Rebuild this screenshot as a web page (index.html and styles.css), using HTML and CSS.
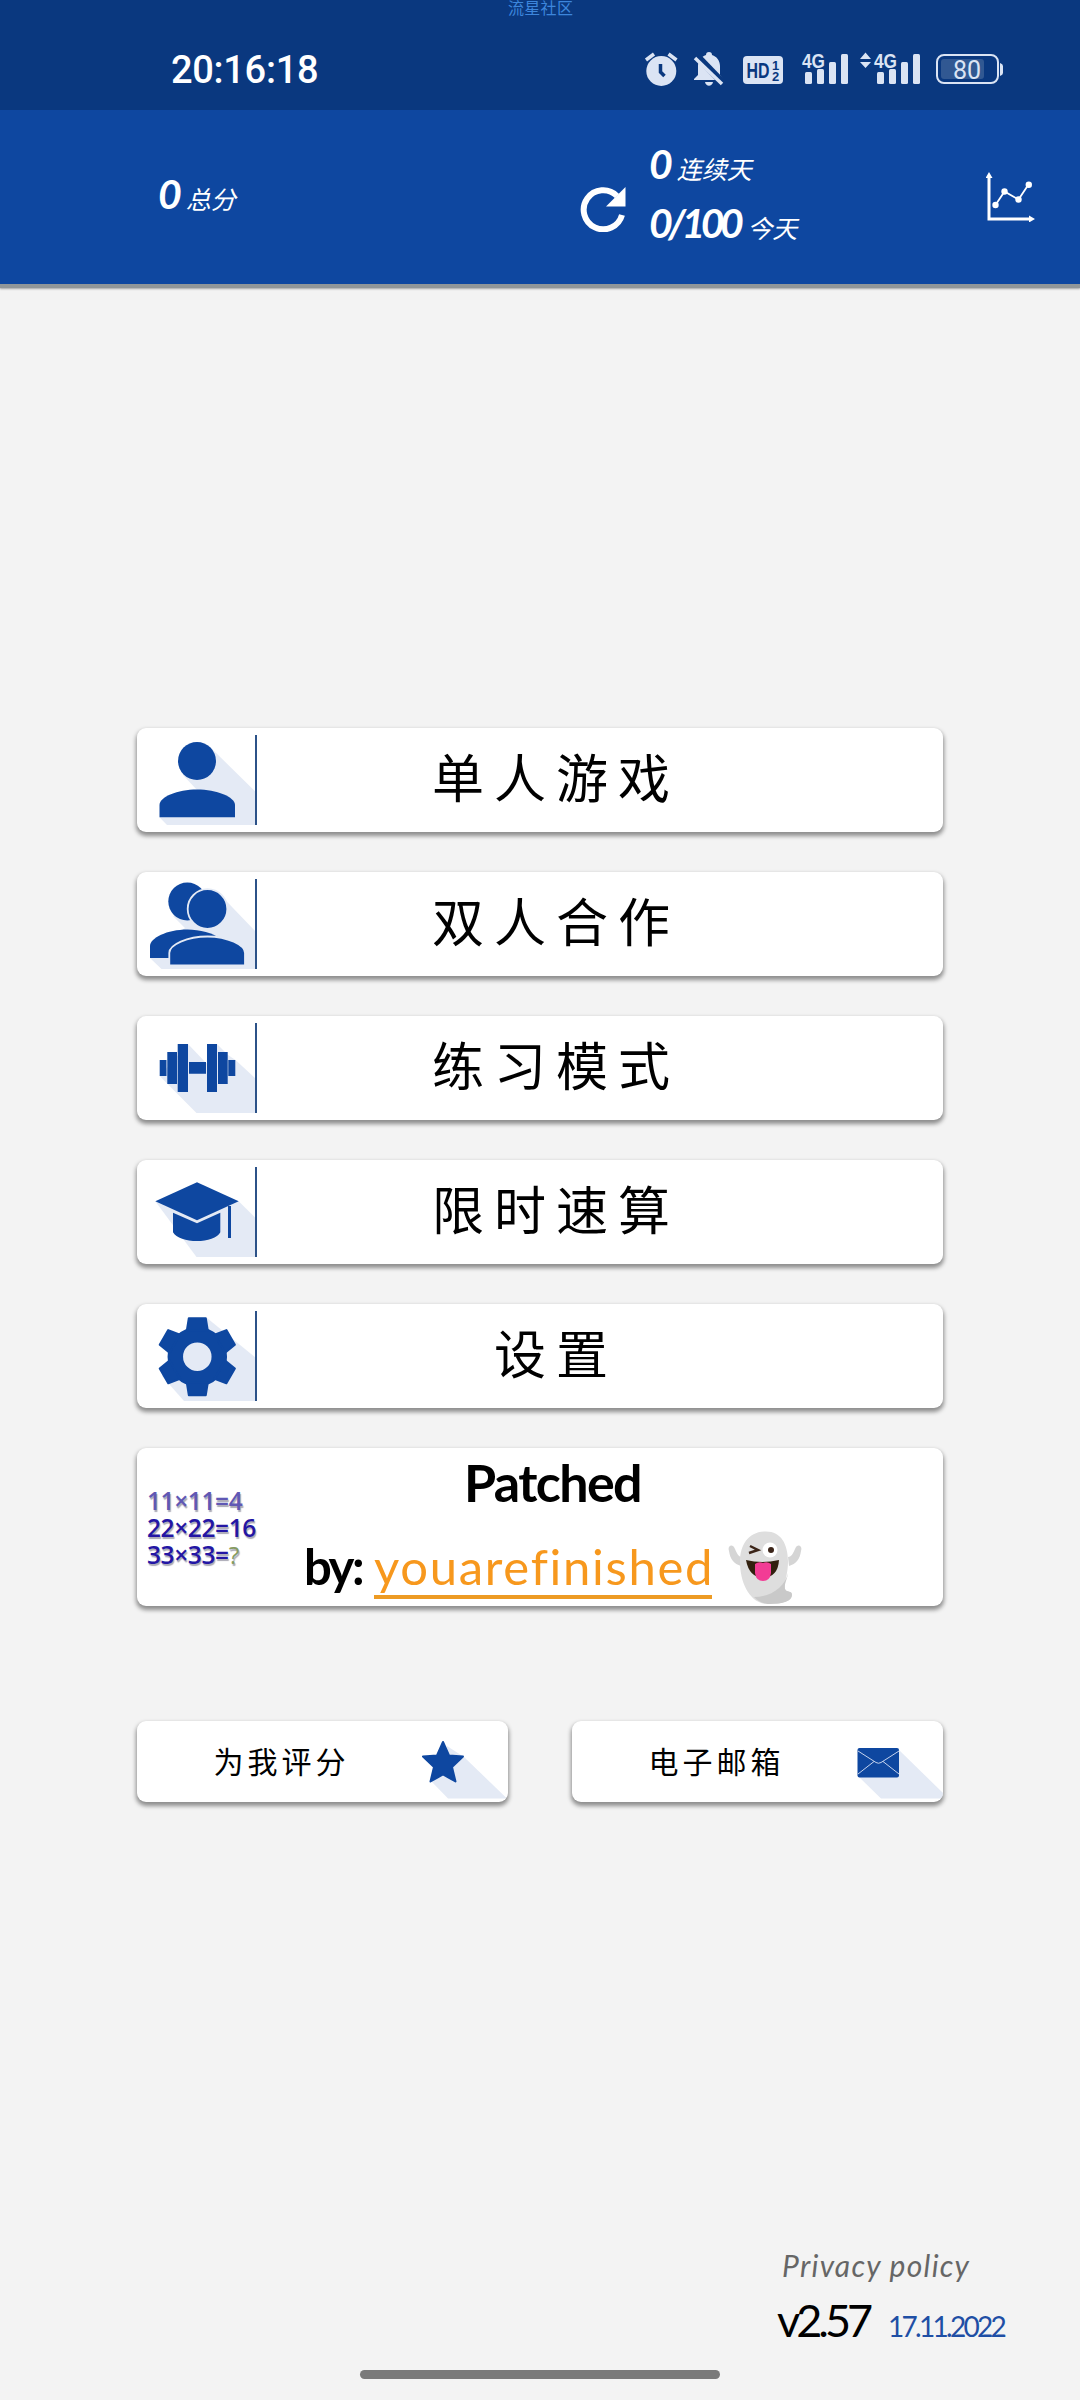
FILE: index.html
```html
<!DOCTYPE html>
<html lang="zh-CN">
<head>
<meta charset="utf-8">
<title>Math</title>
<link rel="stylesheet" href="styles.css">
</head>
<body>
<div class="screen">
  <div class="status">
    <span class="watermark">流星社区</span>
    <span class="clock">20:16:18</span>
    <svg class="status-icons" width="362" height="40" viewBox="642 50 362 40" fill="#dbe4f4">
      <path d="M646 60l8-6M676.500 60l-8-6" stroke="#dbe4f4" stroke-width="3.500"/>
      <circle cx="661.300" cy="71" r="15"/>
      <path d="M660.500 64v8l4 4" fill="none" stroke="#0a387f" stroke-width="3.500"/>
      <path d="M709 52c2 0 3 1 3 3 5 1.500 8 6 8 11v9l3 4v1H694v-1l4-4v-9c0-5 3-9.500 8-11 0-2 1-3 3-3zM705 82h8c-1 5-7 5-8 0z"/>
      <path d="M696 55l27 28" stroke="#0a387f" stroke-width="7"/>
      <path d="M695 58l27 26" stroke="#dbe4f4" stroke-width="3.500"/>
      <rect x="743" y="56" width="40" height="28" rx="4"/>
      <text class="tag" x="746.500" y="78" font-size="21.500" textLength="23" lengthAdjust="spacingAndGlyphs" fill="#0a387f">HD</text>
      <text class="tag" x="772" y="69.500" font-size="13" fill="#0a387f">1</text>
      <text class="tag" x="772" y="81" font-size="13" fill="#0a387f">2</text>
      <text class="tag" x="802" y="67.500" font-size="20" textLength="23" lengthAdjust="spacingAndGlyphs">4G</text>
      <rect x="805" y="72" width="7" height="12" rx="1.500"/><rect x="817" y="69" width="7" height="15" rx="1.500"/><rect x="829" y="62" width="7" height="22" rx="1.500"/><rect x="841" y="54" width="7" height="30" rx="1.500"/>
      <path d="M860 59l5.500-6.500L871 59zM860 62h11l-5.500 6z"/>
      <text class="tag" x="874" y="67.500" font-size="20" textLength="23" lengthAdjust="spacingAndGlyphs">4G</text>
      <rect x="877" y="72" width="7" height="12" rx="1.500"/><rect x="889" y="69" width="7" height="15" rx="1.500"/><rect x="901" y="62" width="7" height="22" rx="1.500"/><rect x="913" y="54" width="7" height="30" rx="1.500"/>
      <rect x="937" y="55" width="61" height="28" rx="7" fill="none" stroke="#dbe4f4" stroke-width="2"/>
      <rect x="941" y="59" width="43" height="20" rx="3" fill="#315892"/>
      <path d="M1000 63q3 1 3 3v7q0 2-3 3z"/>
      <text class="pct" x="953" y="78.500" font-size="25" textLength="28">80</text>
    </svg>
  </div>

  <header class="bar">
    <div class="total"><b>0</b><i>总分</i></div>
    <svg class="reload" width="46" height="46" viewBox="0 0 46 46"><path d="M42 29A19.500 19.500 0 1 1 37 10" fill="none" stroke="#fff" stroke-width="6"/><path d="M45.500 1v19.500H26z" fill="#fff"/></svg>
    <div class="streak">
      <div><b>0</b><i>连续天</i></div>
      <div><b class="wide">0/100</b><i>今天</i></div>
    </div>
    <svg class="chart" width="50" height="50" viewBox="986 172 50 50"><g fill="none" stroke="#fff"><path d="M989 178v41h41" stroke-width="3"/><path d="M995.500 205l9-13.500 14 8 10-15" stroke-width="1.800"/></g><g fill="#fff"><path d="M985.500 178l3.500-6 3.500 6zM1029 215.500l6 3.500-6 3.500z"/><circle cx="995.500" cy="205" r="3.200"/><circle cx="1004.500" cy="191.500" r="3.200"/><circle cx="1018.500" cy="199.500" r="3.200"/><circle cx="1028.800" cy="184.800" r="3.200"/></g></svg>
  </header>

  <main class="menu">
    <div class="card">
      <svg class="icon" viewBox="0 0 120 104"><path class="sh" d="M73.500 19.500L119 64.300V97H30L22.500 89.300 60 62 46 47z"/><circle cx="60" cy="33" r="19"/><path d="M22.500 89.300V77c0-8 18-15.500 37.500-15.500S98 69 98 77v12.300z"/><path class="div" d="M118 7h2v90h-2z"/></svg>
      <span class="label">单人游戏</span>
    </div>
    <div class="card">
      <svg class="icon" viewBox="0 0 120 104"><path class="sh" d="M84 23.500L119 60V97H24.500L13 86l35-30-12-12z"/><circle cx="50.300" cy="29.500" r="19"/><path d="M13 86V74c0-8 17-16.500 37.500-16.500 12 0 26 3.500 32 9L45 86z"/><circle cx="70.500" cy="37" r="19.800" stroke="#e4eaf5" stroke-width="1.800"/><path d="M32.300 93.500V81c0-8.500 18-16.500 38.200-16.500S108 73 108 81v12.500z" stroke="#e4eaf5" stroke-width="1.800"/><path class="div" d="M118 7h2v90h-2z"/></svg>
      <span class="label">双人合作</span>
    </div>
    <div class="card">
      <svg class="icon" viewBox="0 0 120 104"><path class="sh" d="M51 28l18 19h4l7-19 11 11 7.500 5L119 63v34H59.500L22.700 60z"/><path d="M22.700 44h6.800v16h-6.800zM30.300 36H40v32h-9.700zM40.700 28H51v48H40.700zM52 46h17v11.700H52zM70 28h10v48H70zM81 36h9.700v32H81zM91.300 44h7v16h-7z"/><path class="div" d="M118 7h2v90h-2z"/></svg>
      <span class="label">练习模式</span>
    </div>
    <div class="card">
      <svg class="icon" viewBox="0 0 120 104"><path class="sh" d="M101.700 41.300L119 58.500V97H59.500L18.300 41.300z"/><path d="M60 22.300l41.700 19L60 60.300l-41.700-19z"/><path d="M36 52.700l24 10.600 23.300-10.600v19.600C78 84 42 84 36 72.300zM91 46h3v32h-3z"/><path class="div" d="M118 7h2v90h-2z"/></svg>
      <span class="label">限时速算</span>
    </div>
    <div class="card">
      <svg class="icon" viewBox="0 0 120 104"><path class="sh" d="M70 14l49 40v43H47L25 72z"/><g transform="translate(60.300 52.700)"><circle r="22" fill="none" stroke="#0e47a0" stroke-width="15.500"/><g stroke="#0e47a0" stroke-width="2" stroke-linejoin="round"><path id="t" d="M-8.500-38.500H8.500L10.500-26h-21z"/><use href="#t" transform="rotate(60)"/><use href="#t" transform="rotate(120)"/><use href="#t" transform="rotate(180)"/><use href="#t" transform="rotate(240)"/><use href="#t" transform="rotate(300)"/></g></g><path class="div" d="M118 7h2v90h-2z"/></svg>
      <span class="label">设置</span>
    </div>
    <div class="card credit">
      <div class="sums"><span>11×11=4</span><span>22×22=16</span><span>33×33=<em>?</em></span></div>
      <div class="credit-text">
        <div class="patched">Patched</div>
        <div class="by"><b>by:</b><a>youarefinished</a>
          <svg class="ghost" width="74" height="74" viewBox="0 0 74 74"><path d="M1 20c-2-6 4-8 6-2 2 5 4 8 7 8l-1 9C6 33 2 28 1 20zM73 20c2-6-4-8-6-2-2 5-4 8-7 8l1 9c7-2 11-7 12-15z" fill="#d5d5d5"/><path d="M38 .500C53 .500 60 13 60 31c0 12-4 20-3 27 1 4 7 1 7 6 0 6-10 9-24 9C22 73 12 52 12 31 12 13 21 .500 38 .500z" fill="#dedede"/><path d="M60 42c-3 14-17 24-34 24 5 5 10 7 16 7 13 0 22-3 22-9 0-5-5-2-7-6-1-5 2-9 3-16z" fill="#c9c9c9"/><circle cx="42" cy="19" r="7.500" fill="#fff"/><circle cx="43" cy="19" r="3" fill="#3b2418"/><path d="M22 15l8 4-9 3" fill="none" stroke="#3b2418" stroke-width="2.500"/><path d="M18 29q16 4 33 0-1 17-16 18Q21 46 18 29z" fill="#32200f"/><path d="M27 33q4-3 8-1 4-2 8 1v9q-1 8-8 8t-8-8z" fill="#f23c95"/></svg>
        </div>
      </div>
    </div>
  </main>

  <div class="actions">
    <div class="btn"><span>为我评分</span>
      <svg width="86" height="81" viewBox="285 0 86 81"><path class="sh" d="M310 25l17 11 43 41.500h-59L294 60z"/><path d="M306 21l6 13.500 14 1-11 10.500 3.500 14.500-12.500-7-12.500 7L297 46l-11-10.500 14-1z" stroke="#0e47a0" stroke-width="2" stroke-linejoin="round"/></svg></div>
    <div class="btn"><span>电子邮箱</span>
      <svg width="86" height="81" viewBox="285 0 86 81"><path class="sh" d="M326 28l45 44v5.500h-62L286 55z"/><rect x="285.500" y="27" width="41.500" height="29.500" rx="2"/><path d="M286 30l18 11.500q2.500 1.500 5 0L327 30M286 53l16-12.500M327 53l-16-12.500" fill="none" stroke="#c4d3ee"/></svg></div>
  </div>

  <footer class="foot">
    <div class="policy">Privacy policy</div>
    <div class="ver"><span class="num">v2.57</span><span class="date">17.11.2022</span></div>
  </footer>
  <div class="gesture"></div>
</div>
</body>
</html>
```
FILE: styles.css
```css
* { box-sizing: border-box; }
body { margin: 0; background: #f3f3f3; font-family: Lato, "Noto Sans CJK SC", sans-serif; color: #000; }
.screen { width: 1080px; height: 2400px; display: flex; flex-direction: column; position: relative; overflow: hidden; }
.status { height: 110px; flex: none; background: #0a387f; display: flex; justify-content: space-between; align-items: flex-start; padding: 50px 76px 0 171px; }
.watermark { position: absolute; top: 0; left: 508px; font-size: 16px; line-height: 16px; letter-spacing: .300px; color: #3d86dc; white-space: nowrap; }
.clock { font: 500 38px/40px Roboto, sans-serif; letter-spacing: -.300px; color: #fff; white-space: nowrap; }
.tag { font-family: "Liberation Sans", sans-serif; font-weight: 700; }
.pct { font-family: Roboto, sans-serif; font-weight: 400; }

.bar { height: 174px; flex: none; background: #0e47a0; color: #fff; display: flex; align-items: flex-start; padding-left: 158px; box-shadow: 0 4px 1px #909699, 0 5px 2px #aaa; }
.bar b { font-size: 41px; font-style: italic; line-height: 59px; letter-spacing: -2px; }
.bar i { font-size: 25px; margin-left: 6px; }
.total { padding-top: 54px; width: 422px; }
.reload { margin-top: 76px; }
.streak { padding-top: 24px; margin-left: 23px; width: 337px; }
.streak > div { height: 59px; }
.bar .wide { letter-spacing: -4.500px; }
.bar .wide + i { margin-left: 8px; }
.chart { margin-top: 62px; }

.menu { margin: 444px 137px 0; display: flex; flex-direction: column; gap: 40px; }
.card, .btn { background: #fff; border-radius: 9px; box-shadow: 0 3px 4px 1px rgba(0,0,0,.42); }
.card { height: 104px; display: flex; align-items: center; }
.icon { width: 120px; height: 104px; flex: none; fill: #0e47a0; }
.sh { fill: #e4eaf5; }
.div { fill: #2c5288; }
.label { flex: 1; text-align: center; padding: 0 98px 4px 10px; font-size: 52px; line-height: 76px; letter-spacing: 10px; }
.credit { height: 158px; align-items: stretch; }
.sums { width: 120px; padding: 39px 0 0 10px; display: flex; flex-direction: column; font: 600 24.500px/27px "Open Sans", sans-serif; color: #2416a4; text-shadow: 1px 2px 1px #aaa9b5; letter-spacing: -.400px; white-space: nowrap; }
.sums span:first-child { color: #6058b4; }
.sums em { font-weight: 400; font-style: normal; color: #869b62; }
.credit-text { flex: 1; padding-top: 3px; }
.patched { font-size: 52px; font-weight: 700; line-height: 62px; margin-left: 207px; letter-spacing: -1.600px; }
.by { display: flex; align-items: flex-start; margin: 18px 0 0 47px; height: 74px; line-height: 70px; font-size: 49px; }
.by b { width: 70px; flex: none; letter-spacing: -2.500px; }
.by a { width: 338px; flex: none; height: 68px; border-bottom: 4px solid #ed9b24; color: #f7981d; letter-spacing: 1.700px; white-space: nowrap; }
.ghost { margin-left: 16px; flex: none; }

.actions { margin: 115px 137px 0; display: flex; justify-content: space-between; }
.btn { width: 371px; height: 81px; display: flex; align-items: center; overflow: hidden; }
.btn span { width: 285px; text-align: center; font-size: 30px; letter-spacing: 4px; padding-left: 4px; padding-bottom: 4px; }
.btn svg { fill: #0e47a0; }

.foot { margin: 443px 0 0 777px; }
.policy { font-size: 30px; line-height: 40px; font-style: italic; color: #666; padding-left: 5px; letter-spacing: 1.300px; }
.ver { display: flex; align-items: baseline; margin-top: 5px; line-height: 60px; }
.num { font-size: 45px; width: 111px; letter-spacing: -4px; }
.date { font-size: 28px; color: #1f4fa5; letter-spacing: -2.700px; }
.gesture { position: absolute; left: 360px; top: 2370px; width: 360px; height: 9px; border-radius: 5px; background: #7a7a7a; }
```
